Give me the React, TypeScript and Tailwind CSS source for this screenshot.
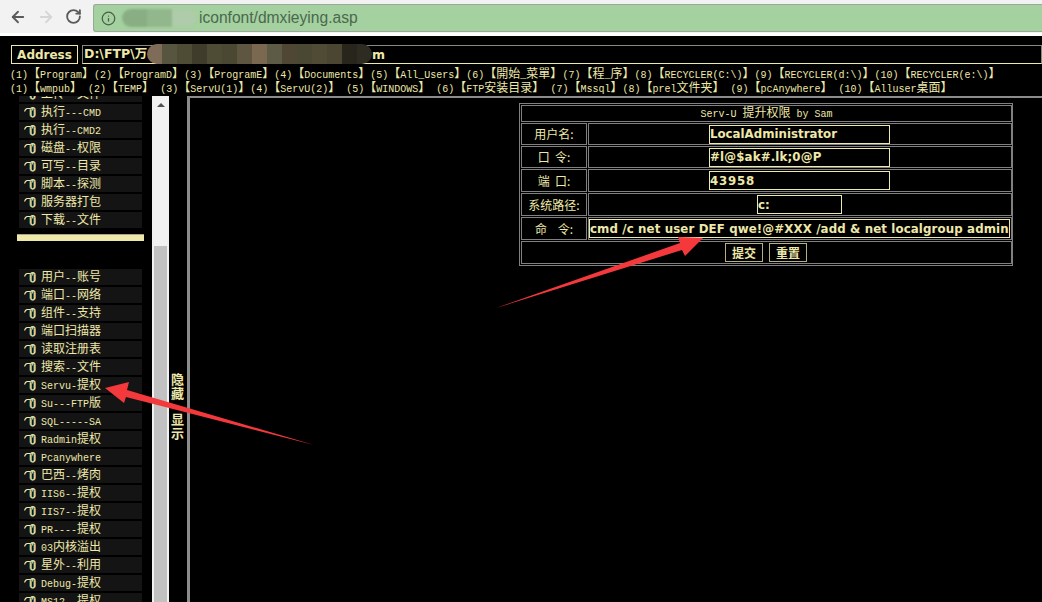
import React from 'react';
import { ArrowLeft, ArrowRight, Info, RotateCw } from 'lucide-react';

const linesTop = [
  '(1)【Program】(2)【ProgramD】(3)【ProgramE】(4)【Documents】(5)【All_Users】(6)【開始_菜單】(7)【程_序】(8)【RECYCLER(C:\\)】(9)【RECYCLER(d:\\)】(10)【RECYCLER(e:\\)】',
  '(1)【wmpub】 (2)【TEMP】 (3)【ServU(1)】(4)【ServU(2)】 (5)【WINDOWS】 (6)【FTP安装目录】 (7)【Mssql】(8)【prel文件夹】 (9)【pcAnywhere】 (10)【Alluser桌面】',
];

const menuA = ['上传--文件', '执行---CMD', '执行--CMD2', '磁盘--权限', '可写--目录', '脚本--探测', '服务器打包', '下载--文件'];
const menuB = [
  '用户--账号', '端口--网络', '组件--支持', '端口扫描器', '读取注册表', '搜索--文件', 'Servu-提权', 'Su---FTP版', 'SQL-----SA', 'Radmin提权',
  'Pcanywhere', '巴西--烤肉', 'IIS6--提权', 'IIS7--提权', 'PR----提权', '03内核溢出', '星外--利用', 'Debug-提权', 'MS12--提权',
];

const smudge = [
  'bg-[#7f6c58]', 'bg-[#57543f]', 'bg-[#4f4c36]', 'bg-[#3f3c2b]', 'bg-[#4e4c35]', 'bg-[#4a4832]', 'bg-[#5e5641]', 'bg-[#7a6850]',
  'bg-[#5d5a45]', 'bg-[#4f4733]', 'bg-[#4a4833]', 'bg-[#4f4b34]', 'bg-[#4a4631]', 'bg-[#28261c]', 'bg-[#2e2c22]',
];

function Mixed({ text }: { text: string }) {
  const parts = text.split(/([\u3000-\u9fff\uff00-\uffef]+)/);
  return (
    <span className="whitespace-pre">
      {parts.map((part, i) =>
        i % 2 === 1 ? (
          <span key={i} className="text-[12px] font-['Noto_Sans_CJK_SC',sans-serif]">{part}</span>
        ) : (
          <span key={i} className="text-[10px] font-['Liberation_Mono',monospace]">{part}</span>
        ),
      )}
    </span>
  );
}

function MouseIcon() {
  return (
    <svg width="12" height="12" viewBox="0 0 12 12" fill="none" className="shrink-0">
      <rect x="6" y="1.5" width="4" height="9.5" rx="2" stroke="#35b8b0" />
      <rect x="7.4" y="1.5" width="4" height="9.5" rx="2" stroke="#c98a50" />
      <rect x="6.7" y="1.5" width="4" height="9.5" rx="2" stroke="#eee8aa" />
      <path d="M8.7 1.5V4.5" stroke="#eee8aa" />
      <path d="M0.5 5.5L1.5 3.5L3 2.5H6.5" stroke="#eee8aa" strokeWidth="1.2" />
    </svg>
  );
}

function MenuRow({ label }: { label: string }) {
  return (
    <div className="flex items-center gap-[5px] h-4 w-[123px] ml-[19px] pl-[5px] mb-0.5 bg-[#141414] leading-4">
      <MouseIcon />
      <Mixed text={label} />
    </div>
  );
}

function FormRow({ label, h, children }: { label: string; h: string; children: React.ReactNode }) {
  return (
    <>
      <div className={`${h} border border-[#808080] flex items-center justify-center text-[12px] whitespace-pre font-['Noto_Sans_CJK_SC',sans-serif]`}>
        {label}
      </div>
      <div className={`${h} border border-[#808080] flex items-center justify-center pr-px`}>{children}</div>
    </>
  );
}

function Field({ value, width, tracking = '' }: { value: string; width: string; tracking?: string }) {
  return (
    <input
      readOnly
      value={value}
      className={`${width} ${tracking} h-[19px] px-0 bg-black border border-[#eee8aa] text-[#eee8aa] text-[11.8px] font-bold font-['DejaVu_Sans',sans-serif] outline-none`}
    />
  );
}

export default function App() {
  return (
    <div className="relative w-[1042px] h-[602px] overflow-hidden bg-black text-[#eee8aa] flex flex-col">
      {/* browser chrome */}
      <div className="h-9 shrink-0 bg-white">
        <div className="h-[33px] bg-[#f2f2f2] flex items-center pl-[9px]">
          <ArrowLeft size={18} strokeWidth={2.4} className="text-[#5a5a5a]" />
          <ArrowRight size={18} strokeWidth={2.4} className="text-[#d6d6d6] ml-[10px]" />
          <RotateCw size={17} strokeWidth={2.6} className="text-[#5a5a5a] ml-[10px]" />
          <div className="ml-[11px] mt-[3px] flex-1 h-[28px] flex items-center pl-[7px] bg-[#a5d09f] border border-r-0 border-[#9aa89a] rounded-l-[3px]">
            <Info size={15} strokeWidth={2} className="text-[#475f48]" />
            <div className="ml-[6px] w-[75px] h-[18px] flex overflow-hidden rounded-full blur-[1px]">
              <div className="flex-1 bg-[#8aae84]" />
              <div className="flex-1 bg-[#93b78d]" />
              <div className="flex-1 bg-[#aecbaa]" />
            </div>
            <span className="ml-[2px] text-[15.6px] text-[#49694e] font-['Liberation_Sans',sans-serif]">iconfont/dmxieying.asp</span>
          </div>
        </div>
      </div>

      {/* address row */}
      <div className="flex pt-[9px] pl-[11px] shrink-0">
        <div className="w-[67px] h-[19px] border border-[#eee8aa] flex items-center justify-center text-[12px] font-bold font-['DejaVu_Sans',sans-serif]">
          Address
        </div>
        <div className="ml-1 flex-1 h-[19px] flex items-center pl-px border border-[#8a8a7a] border-b-[#eee8aa] text-[12.5px] font-bold font-['DejaVu_Sans','Noto_Sans_CJK_SC',sans-serif]">
          <span className="whitespace-pre">D:\FTP\万</span>
          <div className="absolute left-[147px] top-[44px] w-[225px] h-[20px] flex overflow-hidden rounded-full">
            {smudge.map((c, i) => (
              <div key={i} className={`flex-1 ${c}`} />
            ))}
          </div>
          <span className="absolute left-[372px] top-[46px]">m</span>
        </div>
      </div>

      {/* quick path links */}
      <div className="mt-px mb-[3px] pl-2.5 shrink-0 leading-[14px]">
        {linesTop.map((line, i) => (
          <div key={i} className="h-3.5">
            <Mixed text={line} />
          </div>
        ))}
      </div>

      <div className="flex-1 flex min-h-0">
        {/* left menu */}
        <div className="w-[152px] shrink-0 overflow-hidden">
          <div className="-mt-2.5">
            {menuA.map((m) => (
              <MenuRow key={m} label={m} />
            ))}
            <div className="ml-[17px] mt-1.5 mb-[26px] w-[127px] h-[7px] bg-[#eee8aa] border-t border-[#a8a488]" />
            <div className="pt-0.5">
              {menuB.map((m) => (
                <MenuRow key={m} label={m} />
              ))}
            </div>
          </div>
        </div>

        {/* scrollbar */}
        <div className="w-[17px] shrink-0 bg-[#f1f1f1] flex flex-col items-center">
          <div className="mt-[7px] w-0 h-0 border-x-4 border-x-transparent border-b-4 border-b-[#505050]" />
          <div className="mt-[139px] flex-1 w-[13px] bg-[#c1c1c1]" />
        </div>

        {/* hide/show toggle */}
        <div className="w-[18px] shrink-0 flex flex-col items-center pt-[276px] pr-px text-[13px] leading-[14px] font-bold font-['Noto_Sans_CJK_SC',sans-serif]">
          <span>隐</span>
          <span>藏</span>
          <span className="mt-[12px]">显</span>
          <span>示</span>
        </div>

        {/* main frame */}
        <div className="flex-1 border-l-[3px] border-t-2 border-[#8c8c8c] flex justify-end items-start pt-[5px] pr-[29px]">
          <div className="w-[494px] border border-[#808080] p-px grid grid-cols-[66px_424px] gap-px">
            <div className="col-span-2 h-[17px] border border-[#808080] flex items-center justify-center leading-[14px] pb-px">
              <Mixed text="Serv-U 提升权限 by Sam" />
            </div>
            <FormRow label="用户名:" h="h-[22px]">
              <Field value="LocalAdministrator" width="w-[181px]" />
            </FormRow>
            <FormRow label="口  令:" h="h-[22px]">
              <Field value="#l@$ak#.lk;0@P" width="w-[181px]" tracking="tracking-[0.15px]" />
            </FormRow>
            <FormRow label="端  口:" h="h-[23px]">
              <Field value="43958" width="w-[181px]" tracking="tracking-[0.8px]" />
            </FormRow>
            <FormRow label="系统路径:" h="h-[23px]">
              <Field value="c:" width="w-[85px]" />
            </FormRow>
            <FormRow label="命    令:" h="h-[23px]">
              <Field value="cmd /c net user DEF qwe!@#XXX /add & net localgroup admin" width="w-[421px]" tracking="tracking-[0.12px]" />
            </FormRow>
            <div className="col-span-2 h-[23px] border border-[#808080] flex items-center justify-center gap-1.5 pr-px">
              <button className="w-[38px] h-[19px] border border-[#b5b083] text-[12px] leading-none font-bold font-['Noto_Sans_CJK_SC',sans-serif]">提交</button>
              <button className="w-[38px] h-[19px] border border-[#b5b083] text-[12px] leading-none font-bold font-['Noto_Sans_CJK_SC',sans-serif]">重置</button>
            </div>
          </div>
        </div>
      </div>

      {/* annotation arrows */}
      <svg className="absolute inset-0 pointer-events-none" width="1042" height="602" viewBox="0 0 1042 602">
        <polygon points="105,388 129,382 127,390 314,445 126,397 124,403" fill="#f4393c" />
        <polygon points="703,238 678,237 680,243 496,308 682,250 685,256" fill="#f4393c" />
      </svg>
    </div>
  );
}
